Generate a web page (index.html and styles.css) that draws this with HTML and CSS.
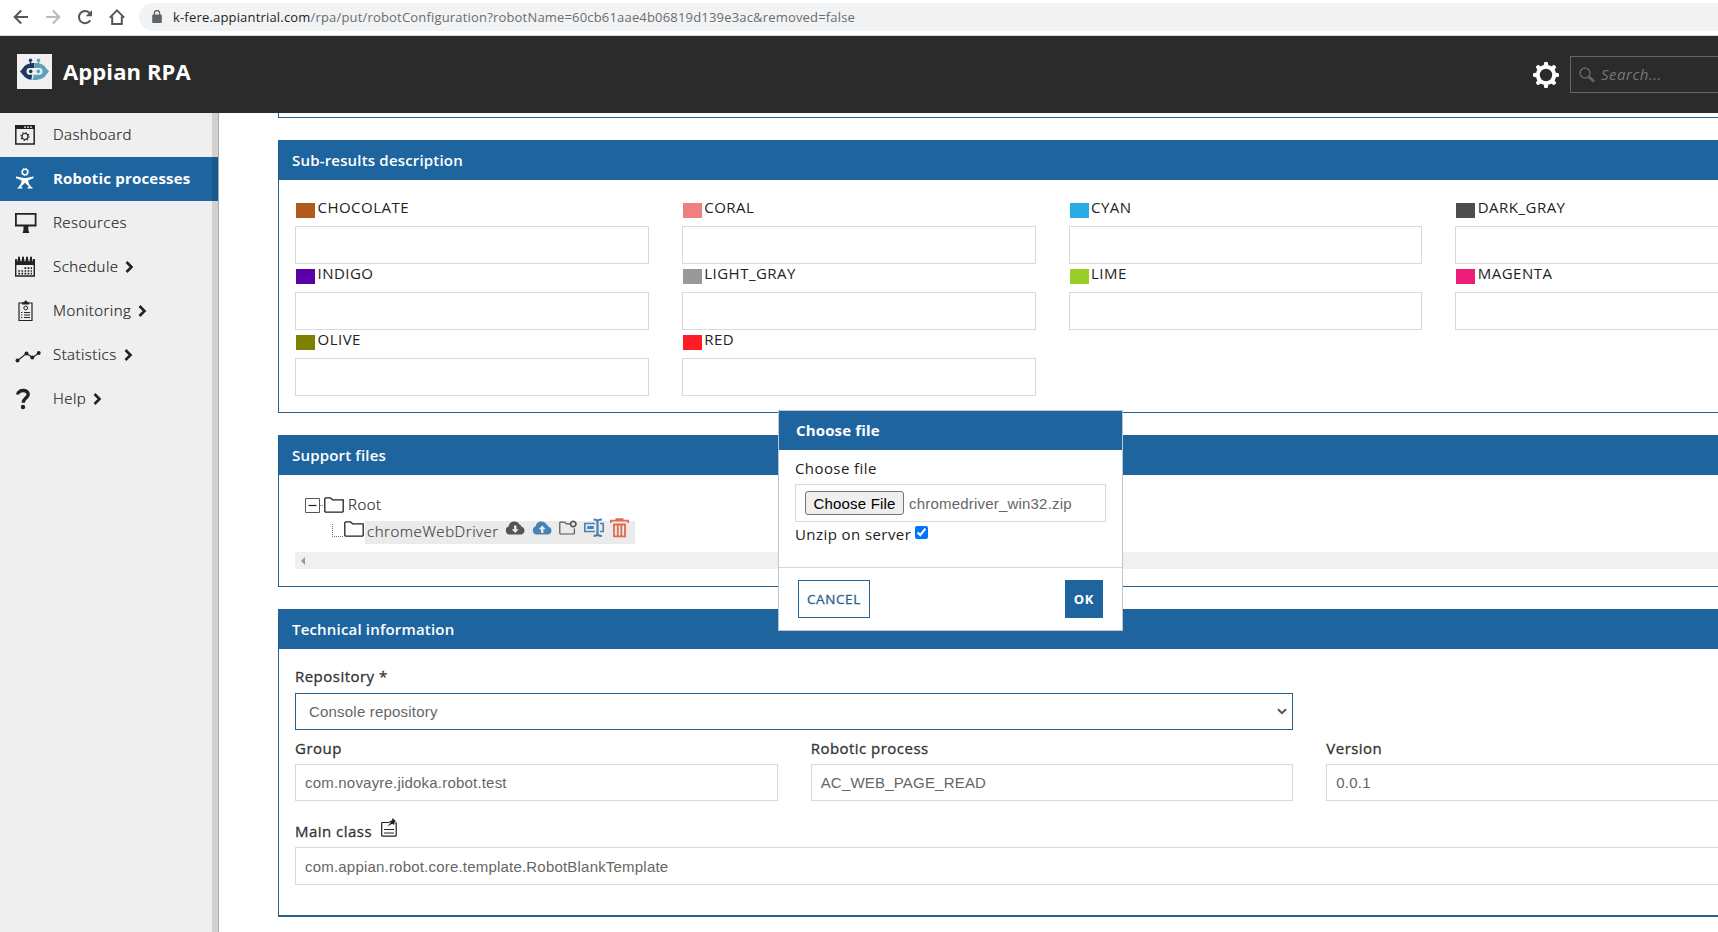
FILE: index.html
```html
<!DOCTYPE html>
<html lang="en">
<head>
    <meta charset="UTF-8">
    <meta name="viewport" content="width=device-width, initial-scale=1.0">
    <title>Appian RPA</title>
    <link rel="stylesheet" href="styles.css">
</head>
<body>
    <!-- Browser bar -->
    <div class="browser-bar">
        <svg class="nav-icon" viewBox="0 0 16 16"><path d="M15 8H2M8.2 1.5L1.7 8l6.5 6.5"/></svg>
        <svg class="nav-icon disabled" viewBox="0 0 16 16"><path d="M1 8h13M7.8 1.5L14.3 8l-6.5 6.5"/></svg>
        <svg class="nav-icon" viewBox="0 0 16 16"><path d="M13.3 11.2A6.1 6.1 0 1 1 12.6 4"/><path class="solid" d="M15 1v6.3H8.7z"/></svg>
        <svg class="nav-icon home" viewBox="0 0 16 16"><path d="M.8 8.6L8 1.4l7.2 7.2M3.2 7.5V15h9.6V7.5"/></svg>
        <div class="url-box">
            <svg class="lock" viewBox="0 0 10 13"><path fill="#5f6368" d="M1.2 4.5h7.6a1 1 0 0 1 1 1V12a1 1 0 0 1-1 1H1.2a1 1 0 0 1-1-1V5.5a1 1 0 0 1 1-1z"/><path fill="none" stroke="#5f6368" stroke-width="1.3" d="M2.4 5V3.2a2.6 2.6 0 0 1 5.2 0V5"/></svg>
            <span class="url"><b>k-fere.appiantrial.com</b>/rpa/put/robotConfiguration?robotName=60cb61aae4b06819d139e3ac&amp;removed=false</span>
        </div>
    </div>

    <header class="header">
        <svg class="logo" viewBox="0 0 35 35">
            <rect width="35" height="35" fill="#f0f0f0"/>
            <path fill="#1d3a5c" d="M17.500 9c-5.500 0-9.500 1.500-11.500 5l-3 3.500L6 21c2 3 5 4.800 9.500 5z"/>
            <path fill="#5f9fbd" d="M17.500 9c6.500 0 9.500 1.500 11.500 5l3 3.500-3 3.500c-2 3.500-6 5-13 5z"/>
            <rect x="9.500" y="14" width="16" height="6.800" rx="3.400" fill="#f0f0f0"/>
            <path stroke="#f0f0f0" stroke-width="1.200" d="M16 20l-1.200 6.500"/>
            <path stroke="#1d3a5c" stroke-width="1.300" d="M13.500 10V7"/>
            <path stroke="#5f9fbd" stroke-width="1.300" d="M21.500 10V7"/>
            <circle cx="13.500" cy="6.300" r="1.700" fill="#1d3a5c"/>
            <circle cx="21.500" cy="6.300" r="1.700" fill="#5f9fbd"/>
            <circle cx="13.700" cy="17.400" r="1.800" fill="#1d3a5c"/>
            <circle cx="21.300" cy="17.400" r="1.800" fill="#5f9fbd"/>
        </svg>
        <h1 class="brand">Appian RPA</h1>
        <svg class="gear" viewBox="-13 -13 26 26">
            <circle r="8.200" fill="none" stroke="#fff" stroke-width="4"/>
            <g fill="#fff">
                <path id="tooth" d="M-2.400-9.500L-1.600-13h3.200l.8 3.500zM-2.400 9.500L-1.600 13h3.200l.8-3.500z"/>
                <use href="#tooth" transform="rotate(45)"/>
                <use href="#tooth" transform="rotate(90)"/>
                <use href="#tooth" transform="rotate(135)"/>
            </g>
        </svg>
        <div class="search">
            <svg viewBox="0 0 16 16"><circle cx="6" cy="6" r="5" fill="none" stroke="#666" stroke-width="1.500"/><path stroke="#666" stroke-width="3" d="M10 10l5 4.500"/></svg>
            <span>Search...</span>
        </div>
    </header>

    <div class="layout">
        <nav class="sidebar">
            <a class="menu-item">
                <svg viewBox="0 0 26 22"><path fill="none" stroke="#222" stroke-width="1.500" d="M.8 2h18.400v18H.8z"/><path fill="#222" d="M0 1h20v4H0z"/><path stroke="#efefef" stroke-width="1.300" stroke-dasharray="2 1" d="M9 3.200h9"/><circle cx="10" cy="12.500" r="3" fill="none" stroke="#222" stroke-width="1.200"/><circle cx="10" cy="12.500" r="4" fill="none" stroke="#222" stroke-width="1.200" stroke-dasharray="1.200 1.940"/></svg>
                Dashboard
            </a>
            <a class="menu-item active">
                <svg viewBox="0 0 26 22"><circle cx="10" cy="4" r="2.700" fill="none" stroke="#fff" stroke-width="1.400"/><circle cx="10" cy="4" r="3.700" fill="none" stroke="#fff" stroke-dasharray="1.200 1.700"/><path fill="#fff" d="M1 8.500c3 .2 5 1.500 9 1.500s6-1.300 8.500-1.500v1.700c-2.500.5-4 1.800-5.300 2.300.2 2.500 1 4.500 5 8h-5.500v-1.600h1.600L10 14.700l-4.300 4.200h1.600v1.600H2c3.500-3.500 4.500-5.500 4.600-8-1.500-.5-3-1.800-5.600-2.300z"/></svg>
                Robotic processes
            </a>
            <a class="menu-item">
                <svg viewBox="0 0 26 22"><path fill="none" stroke="#222" stroke-width="1.800" d="M.9 1.900h19.700v11.600H.9z"/><path fill="#222" d="M8.500 14h4.800v4l1 3H7.500l1-3z"/></svg>
                Resources
            </a>
            <a class="menu-item">
                <svg viewBox="0 0 26 22"><path fill="none" stroke="#222" stroke-width="1.400" d="M.7 4h18.600v16H.7z"/><path fill="#222" d="M0 3.500h20V9H0z"/><path stroke="#efefef" stroke-width="4" stroke-dasharray="3.200 .8" d="M2.400 3.200h15.200"/><path stroke="#222" stroke-width="2" stroke-linecap="round" d="M4 1.500v4M8 1.500v4M12 1.500v4M16 1.500v4"/><path stroke="#222" stroke-width="1.700" stroke-dasharray="1.700 1.400" d="M9.500 12.200H17M3.300 15H17M3.300 17.700H17"/></svg>
                Schedule <svg class="arrow" viewBox="0 0 9 12"><path d="M1.500 1l5 5-5 5"/></svg>
            </a>
            <a class="menu-item">
                <svg viewBox="0 0 26 22"><path fill="none" stroke="#222" stroke-width="1.200" d="M4 3h13v17.500H4z"/><path fill="#222" d="M7 4.500V2.300h2L10.300.5h1L12.600 2.300H14v2.200z"/><circle cx="10.700" cy="8" r="1.900" fill="none" stroke="#222"/><path stroke="#222" d="M9 12.500h6M9 15h6M9 17.500h6"/><path stroke="#222" stroke-dasharray="1.300 1.200" d="M6 12.500h2M6 15h2M6 17.500h2"/></svg>
                Monitoring <svg class="arrow" viewBox="0 0 9 12"><path d="M1.500 1l5 5-5 5"/></svg>
            </a>
            <a class="menu-item">
                <svg viewBox="0 0 26 22"><path fill="none" stroke="#222" stroke-width="1.100" d="M2.500 16.500l9-7 6 4 6.500-4.500"/><g fill="#222"><circle cx="2.500" cy="16.500" r="2"/><circle cx="11.500" cy="9.500" r="2"/><circle cx="17.300" cy="13.500" r="2"/><circle cx="23.700" cy="9" r="2"/></g></svg>
                Statistics <svg class="arrow" viewBox="0 0 9 12"><path d="M1.500 1l5 5-5 5"/></svg>
            </a>
            <a class="menu-item">
                <svg viewBox="0 0 26 22"><path fill="none" stroke="#222" stroke-width="3.400" d="M2.700 6.500C3 1.500 13.500 1 13.200 6.500 13 10 8.200 10.300 8.200 14.800"/><circle cx="8" cy="19" r="2.200" fill="#222"/></svg>
                Help <svg class="arrow" viewBox="0 0 9 12"><path d="M1.500 1l5 5-5 5"/></svg>
            </a>
        </nav>

        <main class="content">
            <section class="panel panel-cut"></section>

            <section class="panel results">
                <h2 class="panel-title">Sub-results description</h2>
                <div class="color-grid">
                    <div class="color-field"><label><i class="swatch chocolate"></i>CHOCOLATE</label><input type="text"></div>
                    <div class="color-field"><label><i class="swatch coral"></i>CORAL</label><input type="text"></div>
                    <div class="color-field"><label><i class="swatch cyan"></i>CYAN</label><input type="text"></div>
                    <div class="color-field"><label><i class="swatch dark-gray"></i>DARK_GRAY</label><input type="text"></div>
                    <div class="color-field"><label><i class="swatch indigo"></i>INDIGO</label><input type="text"></div>
                    <div class="color-field"><label><i class="swatch light-gray"></i>LIGHT_GRAY</label><input type="text"></div>
                    <div class="color-field"><label><i class="swatch lime"></i>LIME</label><input type="text"></div>
                    <div class="color-field"><label><i class="swatch magenta"></i>MAGENTA</label><input type="text"></div>
                    <div class="color-field"><label><i class="swatch olive"></i>OLIVE</label><input type="text"></div>
                    <div class="color-field"><label><i class="swatch red"></i>RED</label><input type="text"></div>
                </div>
            </section>

            <section class="panel support">
                <h2 class="panel-title">Support files</h2>
                <div class="tree">
                    <div class="tree-row">
                        <svg class="expander" viewBox="0 0 19 15"><path fill="none" stroke="#555" stroke-width="1" d="M.5.5h14v14H.5z"/><path stroke="#222" stroke-width="1.200" d="M3.500 7.500h8"/><path stroke="#777" stroke-dasharray="1 1" d="M15 7.500h4"/></svg>
                        <svg class="folder" viewBox="0 0 20 16"><path d="M.8 14.500V1.800l1-1h4.700l2 2h10.700v11.700l-.7.700H1.500z"/></svg>
                        <span class="node">Root</span>
                    </div>
                    <div class="tree-row child">
                        <svg class="branch" viewBox="0 0 11 13"><path fill="none" stroke="#777" stroke-dasharray="1 1" d="M.5 0v12.500H11"/></svg>
                        <svg class="folder" viewBox="0 0 20 16"><path d="M.8 14.500V1.800l1-1h4.700l2 2h10.700v11.700l-.7.700H1.500z"/></svg>
                        <div class="node selected">
                            <span>chromeWebDriver</span>
                            <svg class="cloud" viewBox="0 0 20 14"><path fill="#555" d="M4.500 13.500a4.300 4.300 0 0 1-.8-8.300A5.800 5.800 0 0 1 14.500 3.500a3.500 3.500 0 0 1 2 2.200 4 4 0 0 1-.4 7.800z"/><path fill="#ebebeb" d="M9 4.500h2.400v3.700h2.300l-3.500 3.700-3.500-3.700H9z"/></svg>
                            <svg class="cloud" viewBox="0 0 20 14"><path fill="#4682b4" d="M4.500 13.500a4.300 4.300 0 0 1-.8-8.300A5.800 5.800 0 0 1 14.500 3.500a3.500 3.500 0 0 1 2 2.200 4 4 0 0 1-.4 7.800z"/><path fill="#ebebeb" d="M9 11.900h2.400V8.200h2.300l-3.500-3.700-3.500 3.700H9z"/></svg>
                            <svg class="add-folder" viewBox="0 0 18 15"><path fill="none" stroke="#555" stroke-width="1.200" d="M11 3.800H7.200L5.700 2.200H1.200L.8 2.800v10.600l.5.600h13.600l.5-.6V8.500"/><circle cx="14.200" cy="4" r="2.600" fill="none" stroke="#555" stroke-width="1.500"/><path stroke="#555" stroke-width="1.300" d="M14.200.4v1.600M14.200 6v1.600M10.600 4h1.600M16.200 4h1.600"/></svg>
                            <svg class="rename" viewBox="0 0 20 20"><path fill="none" stroke="#4682b4" stroke-width="1.600" d="M11 5.500H.8v8H11M16 5.500h3.200v8H16"/><path fill="#4682b4" d="M3.200 8h6.500v3H3.200z"/><path fill="none" stroke="#4682b4" stroke-width="2.200" d="M9.500 1.500c2 0 4 0 4 2v12c0 2-2 2.500-4 2.500M18 1.500c-2.500 0-4.500 0-4.500 2M13.500 15.500c0 2 2 2.500 4.500 2.500"/></svg>
                            <svg class="trash" viewBox="0 0 19 20"><path fill="none" stroke="#e0694f" stroke-width="1.800" d="M.8 5V2.700h17.500V5M5.500 1.200h8M4 6.500v11.800h11V6.500zM7.800 7v11M11.300 7v11"/></svg>
                        </div>
                    </div>
                    <div class="h-scroll"><svg viewBox="0 0 4 8"><path fill="#999" d="M4 0v8L0 4z"/></svg></div>
                </div>
            </section>

            <section class="panel technical">
                <h2 class="panel-title">Technical information</h2>
                <div class="tech-grid">
                    <div class="field wide">
                        <label>Repository *</label>
                        <div class="select">Console repository<svg viewBox="0 0 10 7"><path d="M1 1.200l4 4 4-4"/></svg></div>
                    </div>
                    <div class="field first"><label>Group</label><input type="text" value="com.novayre.jidoka.robot.test"></div>
                    <div class="field"><label>Robotic process</label><input type="text" value="AC_WEB_PAGE_READ"></div>
                    <div class="field"><label>Version</label><input type="text" value="0.0.1"></div>
                    <div class="field full">
                        <label>Main class
                            <svg class="note" viewBox="0 0 16 19"><path fill="none" stroke="#222" stroke-width="1.200" d="M8.500 4.500H1.200L.7 5v12.500l.5.700h13.500l.5-.7V5l-.7-.5"/><path stroke="#222" stroke-width="1.200" d="M3 11.500h10M3 15h10"/><path fill="#222" d="M11.500 0l3.500 3.200-1.200.6-.6 3.200-2-1.300L6.500 8.500 9.700 4.500 8 3.200l3-.7z"/></svg>
                        </label>
                        <input type="text" value="com.appian.robot.core.template.RobotBlankTemplate">
                    </div>
                </div>
            </section>
        </main>
    </div>

    <!-- Choose file dialog -->
    <div class="dialog">
        <h2 class="dialog-title">Choose file</h2>
        <div class="dialog-body">
            <label>Choose file</label>
            <div class="file-box"><button class="file-button">Choose File</button><span>chromedriver_win32.zip</span></div>
            <label class="unzip">Unzip on server<input type="checkbox" checked></label>
        </div>
        <div class="dialog-footer">
            <button class="btn">CANCEL</button>
            <button class="btn primary">OK</button>
        </div>
    </div>
</body>
</html>
```
FILE: styles.css
```css
* {
    box-sizing: border-box;
}
body {
    margin: 0;
    height: 932px;
    overflow: hidden;
    position: relative;
    background: #fff;
    color: #222;
    font-family: "Open Sans", sans-serif;
    font-size: 15px;
}
svg {
    display: block;
    flex: none;
}

/* Browser bar */
.browser-bar {
    display: flex;
    align-items: center;
    height: 36px;
    padding-left: 13px;
    padding-bottom: 2px;
    border-bottom: 1px solid #d5d8d5;
}
.nav-icon {
    width: 16px;
    height: 16px;
    margin-right: 16px;
    fill: none;
    stroke: #55585c;
    stroke-width: 2;
}
.nav-icon.disabled {
    stroke: #bbb;
}
.nav-icon .solid {
    fill: #55585c;
    stroke: none;
}
.nav-icon.home {
    margin-right: 14px;
}
.url-box {
    flex: 1;
    display: flex;
    align-items: center;
    height: 28px;
    padding-left: 13px;
    border-radius: 14px 0 0 14px;
    background: #f1f3f4;
}
.lock {
    width: 10px;
    height: 13px;
    margin-right: 11px;
}
.url {
    font-size: 13px;
    letter-spacing: 0.18px;
    color: #6a6d70;
    white-space: nowrap;
}
.url b {
    font-weight: 400;
    color: #222;
}

/* App header */
.header {
    display: flex;
    align-items: center;
    height: 77px;
    padding-left: 17px;
    background: #2b2b2b;
}
.logo {
    width: 35px;
    height: 35px;
    margin-top: -6px;
}
.brand {
    margin: -8px 0 0 11px;
    color: #fff;
    font-size: 22px;
    font-weight: 700;
    letter-spacing: 0.1px;
}
.gear {
    width: 26px;
    height: 26px;
    margin-left: auto;
    margin-right: 11px;
}
.search {
    display: flex;
    align-items: center;
    width: 148px;
    height: 37px;
    padding-left: 8px;
    border: 1px solid #666;
    border-right: none;
    color: #777;
    font-size: 15px;
    font-style: italic;
    letter-spacing: 0.5px;
}
.search svg {
    width: 16px;
    height: 16px;
    margin-right: 6px;
}
.search span {
    margin-top: -2px;
}

/* Sidebar */
.layout {
    display: flex;
    height: 819px;
}
.sidebar {
    flex: none;
    width: 219px;
    border-right: 1px solid #aaa;
    background: linear-gradient(to right, transparent 212px, rgba(0, 0, 0, 0.12) 212px), #efefef;
}
.menu-item {
    display: flex;
    align-items: center;
    height: 44px;
    padding-left: 15px;
    padding-bottom: 2px;
    font-weight: 300;
    font-size: 15px;
    letter-spacing: 0.45px;
    -webkit-text-stroke: 0.2px;
}
.menu-item > svg:first-child {
    width: 26px;
    height: 22px;
    margin-right: 12px;
    margin-top: 2px;
}
.menu-item.active {
    background: linear-gradient(to right, transparent 212px, rgba(0, 0, 0, 0.12) 212px), #1e659f;
    color: #fff;
    font-weight: 700;
    letter-spacing: 0.2px;
    -webkit-text-stroke: 0;
}
.menu-item .arrow {
    width: 9px;
    height: 12px;
    margin: 2px 0 0 7px;
    fill: none;
    stroke: #222;
    stroke-width: 2.6;
}

/* Panels */
.content {
    flex: 1;
    overflow: hidden;
    padding-left: 59px;
}
.panel {
    width: 1548px;
    margin-bottom: 22px;
    border: 1px solid #25618f;
}
.panel-cut {
    height: 5px;
    border-top: none;
}
.results {
    height: 273px;
}
.support {
    height: 152px;
}
.technical {
    height: 308px;
    border-bottom-width: 2px;
}
.panel-title {
    height: 39px;
    margin: 0;
    padding-left: 13px;
    background: #1e659f;
    color: #fff;
    font-size: 15px;
    font-weight: 600;
    letter-spacing: 0.18px;
    line-height: 39px;
}
label {
    display: block;
    letter-spacing: 0.42px;
}
input[type="text"], .select, .file-box {
    display: block;
    width: 100%;
    height: 38px;
    padding: 0 9px;
    border: 1px solid #d9d9d9;
    background: #fff;
    color: #666;
    font-family: "Liberation Sans", Arial, sans-serif;
    font-size: 15px;
    letter-spacing: 0.2px;
}
.color-grid {
    display: grid;
    grid-template-columns: repeat(4, 1fr);
    column-gap: 33px;
    padding: 18px 16px 0;
}
.color-field {
    height: 66px;
}
.color-field label {
    display: flex;
    height: 28px;
    letter-spacing: 0.48px;
    line-height: 18px;
}
.swatch {
    width: 19px;
    height: 15px;
    margin: 5px 2.5px 0 1px;
}
.chocolate { background: #b05a1c; }
.coral { background: #f08080; }
.cyan { background: #2aabe4; }
.dark-gray { background: #4d4d4d; }
.indigo { background: #5a00a8; }
.light-gray { background: #999; }
.lime { background: #9acd27; }
.magenta { background: #ee1d78; }
.olive { background: #808000; }
.red { background: #ff1c24; }

/* Support files tree */
.tree {
    padding: 18px 16px 0;
}
.tree-row {
    display: flex;
    align-items: center;
    height: 24px;
    padding-left: 10px;
    font-weight: 300;
    -webkit-text-stroke: 0.2px;
}
.tree-row.child {
    height: 27px;
    padding-left: 37px;
}
.expander {
    width: 19px;
    height: 15px;
}
.folder {
    width: 20px;
    height: 16px;
    margin-top: -1px;
    fill: none;
    stroke: #222;
    stroke-width: 1.3;
}
.child .folder {
    margin: -3px 0 0 1px;
}
.branch {
    width: 11px;
    height: 13px;
}
.node {
    margin: -2px 0 0 4px;
    letter-spacing: 0.5px;
}
.selected {
    display: flex;
    align-items: center;
    width: 270px;
    height: 23px;
    margin: 3px 0 0 1px;
    padding-left: 2px;
    background: #ebebeb;
    color: #444;
}
.selected span {
    width: 138px;
    margin-top: -3px;
    letter-spacing: 0.55px;
}
.selected svg {
    height: 20px;
    margin-top: -9px;
}
.selected .cloud {
    width: 20px;
    height: 14px;
    margin-right: 7px;
}
.selected .add-folder {
    width: 18px;
    height: 15px;
    margin-right: 7px;
}
.selected .rename {
    width: 20px;
    margin-right: 6px;
}
.selected .trash {
    width: 19px;
}
.h-scroll {
    display: flex;
    align-items: center;
    width: 1548px;
    height: 17px;
    margin-top: 8px;
    padding-left: 6px;
    background: #f0f0f0;
}
.h-scroll svg {
    width: 4px;
    height: 8px;
}

/* Technical information */
.tech-grid {
    display: grid;
    grid-template-columns: repeat(3, 1fr);
    grid-template-rows: 81px 71px 84px;
    column-gap: 33px;
    padding: 0 16px;
}
.field {
    display: flex;
    flex-direction: column;
    justify-content: flex-end;
}
.field label {
    display: flex;
    height: 28px;
    color: #333;
    letter-spacing: 0.47px;
    line-height: 24px;
    -webkit-text-stroke: 0.3px;
}
.field input[type="text"], .select {
    height: 37px;
}
.wide {
    grid-column: span 2;
}
.wide label {
    height: 29px;
}
.first {
    grid-column: 1;
}
.full {
    grid-column: span 3;
}
.full input[type="text"] {
    height: 38px;
}
.select {
    display: flex;
    align-items: center;
    justify-content: space-between;
    padding: 0 5px 0 13px;
    border-color: #25618f;
}
.select svg {
    width: 10px;
    height: 7px;
    fill: none;
    stroke: #555;
    stroke-width: 2;
}
.note {
    width: 16px;
    height: 19px;
    margin: -1px 0 0 9px;
}

/* Choose file dialog */
.dialog {
    position: absolute;
    left: 778px;
    top: 410px;
    width: 345px;
    height: 221px;
    border: 1px solid #bfc6cc;
    background: #fff;
}
.dialog-title {
    height: 39px;
    margin: 0;
    padding-left: 17px;
    background: #1e659f;
    color: #fff;
    font-size: 15px;
    font-weight: 700;
    letter-spacing: 0.15px;
    line-height: 38px;
}
.dialog-body {
    height: 117px;
    padding: 6px 16px 0;
}
.dialog-body label {
    height: 28px;
    line-height: 24px;
}
.file-box {
    display: flex;
    align-items: center;
}
.file-button {
    width: 99px;
    height: 24px;
    margin-right: 5px;
    padding: 0;
    border: 1px solid #767676;
    border-radius: 3px;
    background: #efefef;
    color: #000;
    font: 15px "Liberation Sans", Arial, sans-serif;
    letter-spacing: 0.2px;
}
.dialog-body .unzip {
    display: flex;
    line-height: 24px;
}
.unzip input {
    width: 13px;
    height: 13px;
    margin: 4px 0 0 4px;
}
.dialog-footer {
    display: flex;
    justify-content: space-between;
    padding: 12px 19px 0;
    border-top: 1px solid #d5d5d5;
}
.btn {
    min-width: 38px;
    height: 38px;
    padding: 0 8px;
    border: 1px solid #1e659f;
    background: #fff;
    color: #25618f;
    font-family: "Open Sans", sans-serif;
    font-size: 13.5px;
    letter-spacing: 0.6px;
    -webkit-text-stroke: 0.3px;
}
.btn.primary {
    background: #1e659f;
    color: #fff;
    font-size: 13px;
    font-weight: 700;
    -webkit-text-stroke: 0;
}
```
